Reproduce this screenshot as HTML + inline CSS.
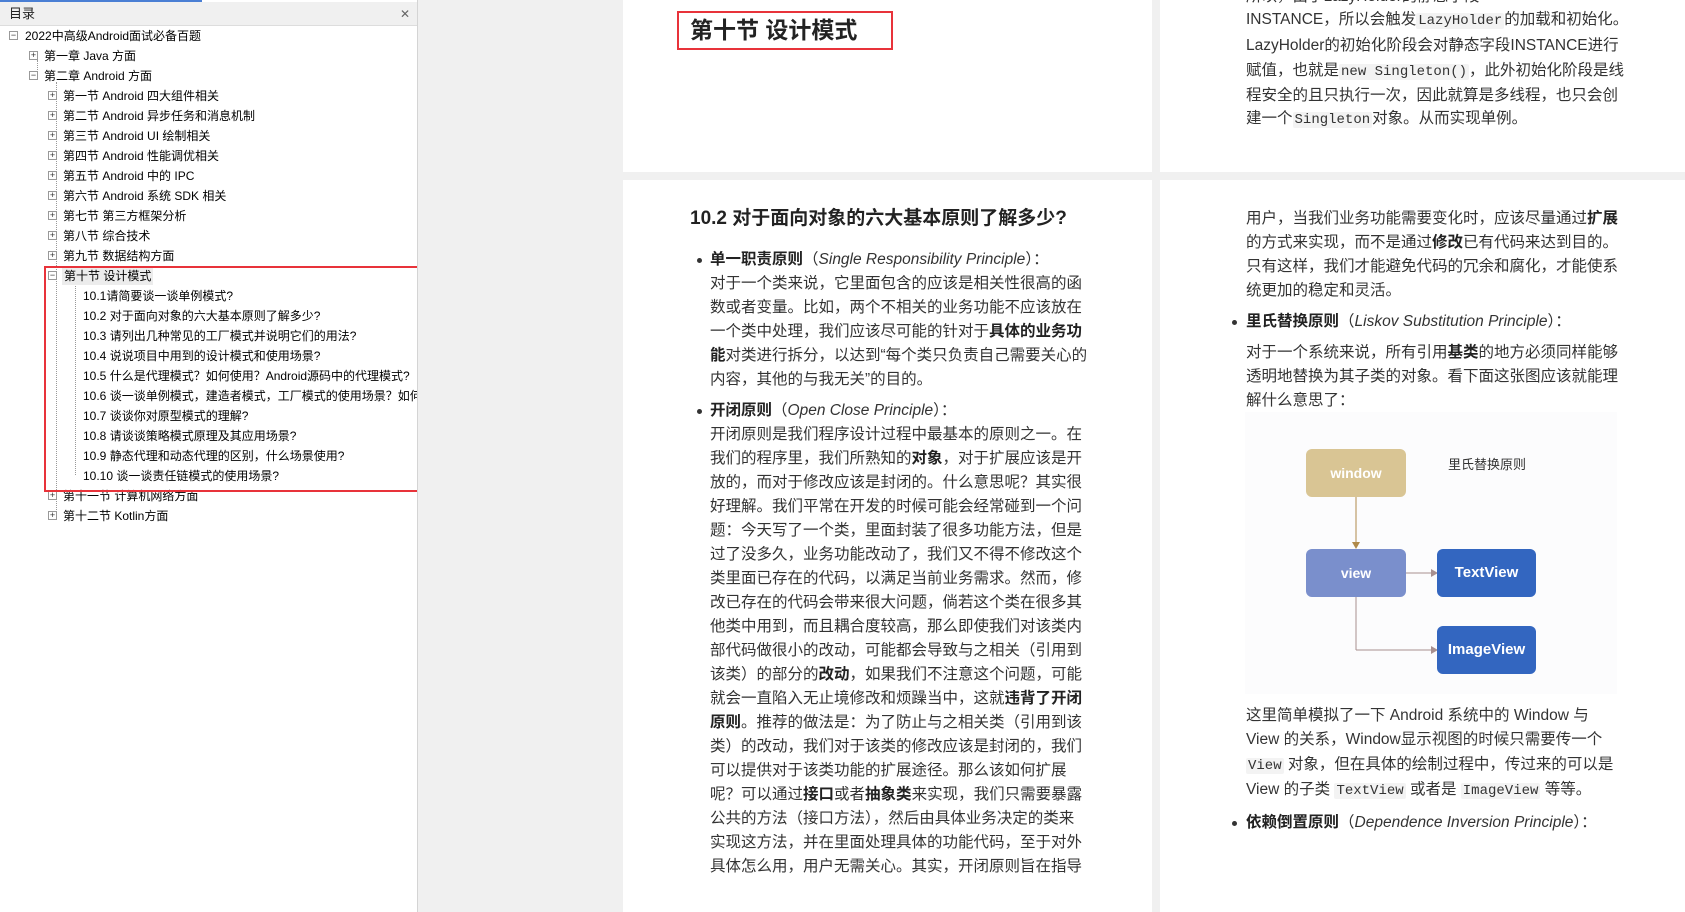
<!DOCTYPE html>
<html><head><meta charset="utf-8">
<style>
*{margin:0;padding:0;box-sizing:border-box}
body{width:1685px;height:912px;overflow:hidden;background:#f0f0f0;position:relative;font-family:"Liberation Sans","Noto Sans CJK SC",sans-serif;}
#side{position:absolute;left:0;top:0;width:418px;height:912px;background:#fff;border-right:1px solid #d4d4d4;overflow:hidden}
#blue{position:absolute;left:0;top:0;width:202px;height:2px;background:#4a7fd4}
#hdr{position:absolute;left:0;top:2px;width:417px;height:24px;background:#f0f0f0;border-bottom:1px solid #ddd;font-size:13px;line-height:24px;padding-left:9px;color:#222}
#hdr span{position:absolute;left:400px;top:0;color:#666;font-size:12px}
.r{position:absolute;font-size:12px;line-height:18px;white-space:nowrap;color:#000}
.bx{position:absolute;width:9px;height:9px;border:1px solid #999;background:#fff;font-size:9px;line-height:7px;text-align:center;color:#333}
.vl{position:absolute;border-left:1px dotted #999;width:0}
.hl{position:absolute;border-top:1px dotted #999;height:0}
#red{position:absolute;left:44px;top:266px;width:384px;height:226px;border:2px solid #e8333a}
.pg{position:absolute;background:#fff}
.l{position:absolute;white-space:nowrap;font-size:15.5px;line-height:24px;color:#333;font-family:"Liberation Sans","Noto Sans CJK SC",sans-serif}
.l b{color:#222}
.l i{font-style:italic}
code{font-family:"Liberation Mono",monospace;font-size:14px;background:#f3f3f3;padding:0 2px;border-radius:2px;color:#333}
.dot{position:absolute;width:5px;height:5px;border-radius:50%;background:#333}
.nd{position:absolute;border-radius:6px;color:#fff;font-weight:bold;font-size:14px;text-align:center;line-height:48px;height:48px}
</style></head><body>
<div id="side">
<div id="blue"></div>
<div id="hdr">目录<span>✕</span></div>
<div class="vl" style="left:18px;top:42px;height:0"></div>
<div class="vl" style="left:37px;top:60px;height:20px"></div>
<div class="vl" style="left:56px;top:82px;height:434px"></div>
<div class="vl" style="left:75px;top:275px;height:200px"></div>

<div class="bx" style="left:9px;top:31px">−</div><div class="r" style="left:25px;top:27px">2022中高级Android面试必备百题</div>
<div class="bx" style="left:29px;top:51px">+</div><div class="r" style="left:44px;top:47px">第一章 Java 方面</div>
<div class="bx" style="left:29px;top:71px">−</div><div class="r" style="left:44px;top:67px">第二章 Android 方面</div>
<div class="bx" style="left:48px;top:91px">+</div><div class="r" style="left:63px;top:87px">第一节 Android 四大组件相关</div>
<div class="bx" style="left:48px;top:111px">+</div><div class="r" style="left:63px;top:107px">第二节 Android 异步任务和消息机制</div>
<div class="bx" style="left:48px;top:131px">+</div><div class="r" style="left:63px;top:127px">第三节 Android UI 绘制相关</div>
<div class="bx" style="left:48px;top:151px">+</div><div class="r" style="left:63px;top:147px">第四节 Android 性能调优相关</div>
<div class="bx" style="left:48px;top:171px">+</div><div class="r" style="left:63px;top:167px">第五节 Android 中的 IPC</div>
<div class="bx" style="left:48px;top:191px">+</div><div class="r" style="left:63px;top:187px">第六节 Android 系统 SDK 相关</div>
<div class="bx" style="left:48px;top:211px">+</div><div class="r" style="left:63px;top:207px">第七节 第三方框架分析</div>
<div class="bx" style="left:48px;top:231px">+</div><div class="r" style="left:63px;top:227px">第八节 综合技术</div>
<div class="bx" style="left:48px;top:251px">+</div><div class="r" style="left:63px;top:247px">第九节 数据结构方面</div>
<div class="bx" style="left:48px;top:271px">−</div><div class="r" style="left:62px;top:267px;background:#ececec;padding:0 2px">第十节 设计模式</div>
<div class="r" style="left:83px;top:287px">10.1请简要谈一谈单例模式?</div>
<div class="r" style="left:83px;top:307px">10.2 对于面向对象的六大基本原则了解多少?</div>
<div class="r" style="left:83px;top:327px">10.3 请列出几种常见的工厂模式并说明它们的用法?</div>
<div class="r" style="left:83px;top:347px">10.4 说说项目中用到的设计模式和使用场景?</div>
<div class="r" style="left:83px;top:367px">10.5 什么是代理模式？如何使用？Android源码中的代理模式?</div>
<div class="r" style="left:83px;top:387px">10.6 谈一谈单例模式，建造者模式，工厂模式的使用场景？如何</div>
<div class="r" style="left:83px;top:407px">10.7 谈谈你对原型模式的理解?</div>
<div class="r" style="left:83px;top:427px">10.8 请谈谈策略模式原理及其应用场景?</div>
<div class="r" style="left:83px;top:447px">10.9 静态代理和动态代理的区别，什么场景使用?</div>
<div class="r" style="left:83px;top:467px">10.10 谈一谈责任链模式的使用场景?</div>
<div class="bx" style="left:48px;top:491px">+</div><div class="r" style="left:63px;top:487px">第十一节 计算机网络方面</div>
<div class="bx" style="left:48px;top:511px">+</div><div class="r" style="left:63px;top:507px">第十二节 Kotlin方面</div>
<div id="red"></div>
</div>

<div class="pg" style="left:623px;top:0;width:529px;height:172px"></div>
<div class="pg" style="left:1160px;top:0;width:525px;height:172px"></div>
<div class="pg" style="left:623px;top:180px;width:529px;height:732px"></div>
<div class="pg" style="left:1160px;top:180px;width:525px;height:732px"></div>

<div style="position:absolute;left:677px;top:11px;width:216px;height:39px;border:2px solid #e8333a"></div>
<div style="position:absolute;left:690px;top:14px;font-size:23px;font-weight:bold;color:#222;line-height:32px;white-space:nowrap">第十节 设计模式</div>

<div class="l" style="left:1246px;top:-15px">所以，由于LazyHolder的静态字段</div>
<div class="l" style="left:1246px;top:8px">INSTANCE，所以会触发<code>LazyHolder</code>的加载和初始化。</div>
<div class="l" style="left:1246px;top:34px">LazyHolder的初始化阶段会对静态字段INSTANCE进行</div>
<div class="l" style="left:1246px;top:59px">赋值，也就是<code>new Singleton()</code>，此外初始化阶段是线</div>
<div class="l" style="left:1246px;top:84px">程安全的且只执行一次，因此就算是多线程，也只会创</div>
<div class="l" style="left:1246px;top:107px">建一个<code>Singleton</code>对象。从而实现单例。</div>

<div style="position:absolute;left:690px;top:205px;font-size:19px;font-weight:bold;color:#222;white-space:nowrap;line-height:28px">10.2 对于面向对象的六大基本原则了解多少?</div>

<div class="dot" style="left:697px;top:258px"></div>
<div class="l" style="left:710px;top:248px"><b>单一职责原则</b>（<i>Single Responsibility Principle</i>）：</div>
<div class="l" style="left:710px;top:272px">对于一个类来说，它里面包含的应该是相关性很高的函</div>
<div class="l" style="left:710px;top:296px">数或者变量。比如，两个不相关的业务功能不应该放在</div>
<div class="l" style="left:710px;top:320px">一个类中处理，我们应该尽可能的针对于<b>具体的业务功</b></div>
<div class="l" style="left:710px;top:344px"><b>能</b>对类进行拆分，以达到“每个类只负责自己需要关心的</div>
<div class="l" style="left:710px;top:368px">内容，其他的与我无关”的目的。</div>
<div class="dot" style="left:697px;top:409px"></div>
<div class="l" style="left:710px;top:399px"><b>开闭原则</b>（<i>Open Close Principle</i>）：</div>
<div class="l" style="left:710px;top:423px">开闭原则是我们程序设计过程中最基本的原则之一。在</div>
<div class="l" style="left:710px;top:447px">我们的程序里，我们所熟知的<b>对象</b>，对于扩展应该是开</div>
<div class="l" style="left:710px;top:471px">放的，而对于修改应该是封闭的。什么意思呢？其实很</div>
<div class="l" style="left:710px;top:495px">好理解。我们平常在开发的时候可能会经常碰到一个问</div>
<div class="l" style="left:710px;top:519px">题：今天写了一个类，里面封装了很多功能方法，但是</div>
<div class="l" style="left:710px;top:543px">过了没多久，业务功能改动了，我们又不得不修改这个</div>
<div class="l" style="left:710px;top:567px">类里面已存在的代码，以满足当前业务需求。然而，修</div>
<div class="l" style="left:710px;top:591px">改已存在的代码会带来很大问题，倘若这个类在很多其</div>
<div class="l" style="left:710px;top:615px">他类中用到，而且耦合度较高，那么即使我们对该类内</div>
<div class="l" style="left:710px;top:639px">部代码做很小的改动，可能都会导致与之相关（引用到</div>
<div class="l" style="left:710px;top:663px">该类）的部分的<b>改动</b>，如果我们不注意这个问题，可能</div>
<div class="l" style="left:710px;top:687px">就会一直陷入无止境修改和烦躁当中，这就<b>违背了开闭</b></div>
<div class="l" style="left:710px;top:711px"><b>原则</b>。推荐的做法是：为了防止与之相关类（引用到该</div>
<div class="l" style="left:710px;top:735px">类）的改动，我们对于该类的修改应该是封闭的，我们</div>
<div class="l" style="left:710px;top:759px">可以提供对于该类功能的扩展途径。那么该如何扩展</div>
<div class="l" style="left:710px;top:783px">呢？可以通过<b>接口</b>或者<b>抽象类</b>来实现，我们只需要暴露</div>
<div class="l" style="left:710px;top:807px">公共的方法（接口方法），然后由具体业务决定的类来</div>
<div class="l" style="left:710px;top:831px">实现这方法，并在里面处理具体的功能代码，至于对外</div>
<div class="l" style="left:710px;top:855px">具体怎么用，用户无需关心。其实，开闭原则旨在指导</div>

<div class="l" style="left:1246px;top:207px">用户，当我们业务功能需要变化时，应该尽量通过<b>扩展</b></div>
<div class="l" style="left:1246px;top:231px">的方式来实现，而不是通过<b>修改</b>已有代码来达到目的。</div>
<div class="l" style="left:1246px;top:255px">只有这样，我们才能避免代码的冗余和腐化，才能使系</div>
<div class="l" style="left:1246px;top:279px">统更加的稳定和灵活。</div>
<div class="dot" style="left:1232px;top:320px"></div>
<div class="l" style="left:1246px;top:310px"><b>里氏替换原则</b>（<i>Liskov Substitution Principle</i>）：</div>
<div class="l" style="left:1246px;top:341px">对于一个系统来说，所有引用<b>基类</b>的地方必须同样能够</div>
<div class="l" style="left:1246px;top:365px">透明地替换为其子类的对象。看下面这张图应该就能理</div>
<div class="l" style="left:1246px;top:389px">解什么意思了：</div>

<div style="position:absolute;left:1245px;top:412px;width:372px;height:282px;background:#fcfcfd"></div>
<svg style="position:absolute;left:1245px;top:412px" width="372" height="282">
<line x1="111" y1="85" x2="111" y2="130" stroke="#b08a4a" stroke-width="1"/>
<polygon points="107,130 115,130 111,137" fill="#b08a4a"/>
<line x1="161" y1="161" x2="188" y2="161" stroke="#a89090" stroke-width="1"/>
<polygon points="186,157 193,161 186,165" fill="#a89090"/>
<line x1="111" y1="185" x2="111" y2="238" stroke="#a89090" stroke-width="1"/>
<line x1="111" y1="238" x2="188" y2="238" stroke="#a89090" stroke-width="1"/>
<polygon points="186,234 193,238 186,242" fill="#a89090"/>
</svg>
<div class="nd" style="left:1306px;top:449px;width:100px;background:#d9c594">window</div>
<div class="nd" style="left:1306px;top:549px;width:100px;background:#7a8fcc">view</div>
<div class="nd" style="left:1437px;top:549px;width:99px;background:#3366c0;font-size:15px">TextView</div>
<div class="nd" style="left:1437px;top:626px;width:99px;background:#3366c0;font-size:15px">ImageView</div>
<div style="position:absolute;left:1448px;top:454px;font-size:13px;color:#333;white-space:nowrap">里氏替换原则</div>

<div class="l" style="left:1246px;top:704px">这里简单模拟了一下 Android 系统中的 Window 与</div>
<div class="l" style="left:1246px;top:728px">View 的关系，Window显示视图的时候只需要传一个</div>
<div class="l" style="left:1246px;top:753px"><code>View</code> 对象，但在具体的绘制过程中，传过来的可以是</div>
<div class="l" style="left:1246px;top:778px">View 的子类 <code>TextView</code> 或者是 <code>ImageView</code> 等等。</div>
<div class="dot" style="left:1232px;top:821px"></div>
<div class="l" style="left:1246px;top:811px"><b>依赖倒置原则</b>（<i>Dependence Inversion Principle</i>）：</div>
</body></html>
